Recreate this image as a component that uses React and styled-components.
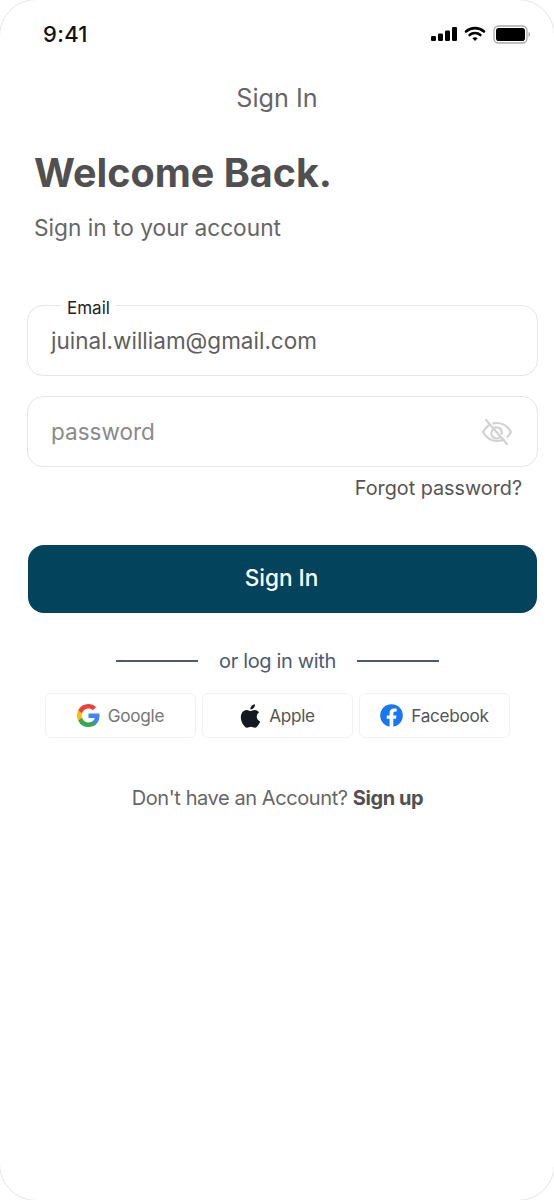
import React from "react";
import styled, { createGlobalStyle } from "styled-components";

const Global = createGlobalStyle`
  html, body { margin: 0; padding: 0; background: #fff; overflow: hidden; }
  * { box-sizing: border-box; }
  body { font-family: Inter, "Liberation Sans", sans-serif; }
`;
const Phone = styled.div`
  width: 556px; height: 1202px; margin: -1px; background: #fff; overflow: hidden;
  border: 1px solid #e6e6e6; border-radius: 37px; display: flex; flex-direction: column;
`;
const StatusBar = styled.div`
  height: 66px; flex: none; padding: 2px 23px 0 43px; display: flex; justify-content: space-between; align-items: center;
`;
const Time = styled.span`font-size: 22px; font-weight: 500; color: #111; letter-spacing: .3px;`;
const StatusIcons = styled.div`display: flex; align-items: center; gap: 7px;`;
const Title = styled.div`text-align: center; font-size: 25.2px; line-height: 30px; color: #666; margin-top: 17px;`;
const Intro = styled.div`padding: 37px 0 0 34px;`;
const Heading = styled.h1`margin: 0; font-size: 39.5px; line-height: 46px; font-weight: 700; color: #505050;`;
const Sub = styled.p`margin: 18px 0 0; font-size: 22.7px; line-height: 28px; color: #666;`;
const Form = styled.div`padding: 63px 16px 0 27px; display: flex; flex-direction: column;`;
const Field = styled.div`
  position: relative; height: 71px; border: 1.5px solid #e6e6e6; border-radius: 16px;
  display: flex; align-items: center; justify-content: space-between; padding: 0 24px 0 23px;
  margin-top: ${p => p.$mt || 0}px;
`;
const FieldLabel = styled.span`
  position: absolute; left: 33px; top: -9px; padding: 0 6px; background: #fff; font-size: 17px; line-height: 22px; color: #222;
`;
const Value = styled.span`font-size: 22.5px; color: ${p => p.$muted ? "#8a8a8a" : "#5f5f5f"};`;
const Forgot = styled.div`text-align: right; font-size: 19.8px; line-height: 24px; color: #555; padding-right: 16px; margin-top: 9px;`;
const Primary = styled.button`
  height: 68px; margin: 45px 1px 0; padding: 0 2px 3px 0; border: 0; border-radius: 16px; background: #03435b; color: #fff;
  font: 500 22.6px Inter, sans-serif;
`;
const Divider = styled.div`display: flex; justify-content: center; align-items: center; gap: 21px; margin-top: 36px; padding-right: 10px;`;
const Line = styled.span`width: 82px; height: 2px; background: #4c5b70;`;
const DividerText = styled.span`font-size: 20px; line-height: 24px; color: #4c5b70; letter-spacing: -.35px;`;
const Socials = styled.div`display: flex; gap: 6px; margin-top: 20px; padding: 0 0 0 18px;`;
const Social = styled.div`
  width: ${p => p.$w}px; height: 45px; border: 1.5px solid #f2f2f2; border-radius: 6px;
  display: flex; align-items: center; justify-content: center; gap: 8px;
  font-size: 17.2px; letter-spacing: -.3px; color: ${p => p.$c};
`;
const Footer = styled.div`text-align: center; font-size: 20px; line-height: 24px; color: #666; letter-spacing: -.42px; margin-top: 48px; padding-right: 10px;`;
const Strong = styled.b`font-weight: 700; color: #505050;`;

const Signal = () => (
  <svg width="26" height="14" viewBox="0 0 26 14" fill="#000">
    <rect x="0" y="9" width="5" height="5" rx="1.2"/><rect x="7" y="6.5" width="5" height="7.5" rx="1.2"/>
    <rect x="14" y="3.5" width="5" height="10.5" rx="1.2"/><rect x="21" y="0" width="5" height="14" rx="1.2"/>
  </svg>
);
const Wifi = () => (
  <svg width="22" height="16" viewBox="0 0 22 16" fill="none" stroke="#000" strokeWidth="2.6" strokeLinecap="round">
    <path d="M2 5.4C7 1 15 1 20 5.4"/><path d="M5.6 9C8.6 6.4 13.4 6.4 16.4 9"/>
    <path d="M11 15l-2.6-2.8c1.5-1.2 3.700-1.200 5.200 0z" fill="#000" stroke="none"/>
  </svg>
);
const Battery = () => (
  <svg width="38" height="19" viewBox="0 0 38 19">
    <rect x="1" y="1" width="33" height="17" rx="4.5" fill="none" stroke="#aaa" strokeWidth="1.3"/>
    <rect x="3" y="3" width="29" height="13" rx="2.8" fill="#000"/>
    <path d="M35.5 7v5c1-.4 1.6-1.4 1.6-2.500S36.500 7.400 35.500 7z" fill="#aaa"/>
  </svg>
);
const EyeOff = () => (
  <svg width="32" height="28" viewBox="0 0 32 28" fill="none" stroke="#d2d2d2" strokeWidth="2.2" strokeLinecap="round" strokeLinejoin="round">
    <path d="M7.500 7.500C5.400 9 3.500 11.200 2 14c3.500 6 8 9 14 9 2.500 0 4.700-.5 6.700-1.500M12.500 5.400c1.100-.3 2.300-.4 3.500-.4 6 0 10.500 3 14 9-1 1.800-2.200 3.400-3.500 4.700"/>
    <path d="M12 11.500a5 5 0 0 0 7 7.500M14 9.600a5 5 0 0 1 6.500 6"/>
    <path d="M5 2l21 24"/>
  </svg>
);
const Google = () => (
  <svg width="23" height="23" viewBox="0 0 24 24">
    <path fill="#4285F4" d="M23.500 12.300c0-.8-.1-1.700-.2-2.500H12v4.700h6.500a5.500 5.500 0 0 1-2.400 3.600v3h3.800c2.300-2.100 3.600-5.200 3.600-8.800z"/>
    <path fill="#34A853" d="M12 24c3.200 0 6-1.100 7.900-2.900l-3.800-3c-1.100.7-2.400 1.200-4.100 1.200-3.100 0-5.800-2.100-6.700-5H1.300v3.100A12 12 0 0 0 12 24z"/>
    <path fill="#FBBC05" d="M5.300 14.300a7.200 7.200 0 0 1 0-4.600V6.600h-4a12 12 0 0 0 0 10.800z"/>
    <path fill="#EA4335" d="M12 4.800c1.800 0 3.300.6 4.600 1.800l3.400-3.400A11.500 11.500 0 0 0 12 0 12 12 0 0 0 1.300 6.600l4 3.100c.9-2.800 3.600-4.900 6.700-4.900z"/>
  </svg>
);
const Apple = () => (
  <svg width="21" height="24" viewBox="4.800 1.800 17.200 20.500" fill="#14181f">
    <path d="M18.700 12.700c0-2.500 2-3.700 2.100-3.800-1.200-1.700-3-1.900-3.600-2-1.500-.2-3 .9-3.800.9s-2-.9-3.300-.9C8.400 7 6.800 8 6 9.400c-1.800 3.100-.5 7.700 1.300 10.200.9 1.200 1.900 2.600 3.200 2.500 1.300 0 1.800-.8 3.300-.8s2 .8 3.300.8c1.400 0 2.300-1.200 3.100-2.500 1-1.400 1.400-2.800 1.400-2.900-.1 0-2.900-1.100-2.900-4.400z"/>
    <path d="M16.200 5.100c.7-.9 1.200-2 1-3.100-1 0-2.200.7-2.900 1.500-.6.700-1.200 1.900-1 3 1.100.1 2.200-.6 2.900-1.400z"/>
  </svg>
);
const Facebook = () => (
  <svg width="23" height="23" viewBox="0 0 24 24">
    <circle cx="12" cy="12" r="11.800" fill="#1877f2"/>
    <path fill="#fff" d="M16.700 15.500l.5-3.500h-3.300V9.800c0-1 .5-1.900 2-1.900h1.500v-3S15.900 4.700 14.500 4.700c-2.700 0-4.500 1.700-4.500 4.700V12H7v3.500h3v8.400a12 12 0 0 0 3.900 0v-8.400z"/>
  </svg>
);

export default function App() {
  return (
    <Phone>
      <Global />
      <StatusBar>
        <Time>9:41</Time>
        <StatusIcons><Signal /><Wifi /><Battery /></StatusIcons>
      </StatusBar>
      <Title>Sign In</Title>
      <Intro>
        <Heading>Welcome Back.</Heading>
        <Sub>Sign in to your account</Sub>
      </Intro>
      <Form>
        <Field>
          <FieldLabel>Email</FieldLabel>
          <Value>juinal.william@gmail.com</Value>
        </Field>
        <Field $mt={20}>
          <Value $muted>password</Value>
          <EyeOff />
        </Field>
        <Forgot>Forgot password?</Forgot>
        <Primary>Sign In</Primary>
        <Divider><Line /><DividerText>or log in with</DividerText><Line /></Divider>
        <Socials>
          <Social $w={151} $c="#777"><Google />Google</Social>
          <Social $w={151} $c="#555"><Apple />Apple</Social>
          <Social $w={151} $c="#555"><Facebook />Facebook</Social>
        </Socials>
        <Footer>Don't have an Account? <Strong>Sign up</Strong></Footer>
      </Form>
    </Phone>
  );
}
